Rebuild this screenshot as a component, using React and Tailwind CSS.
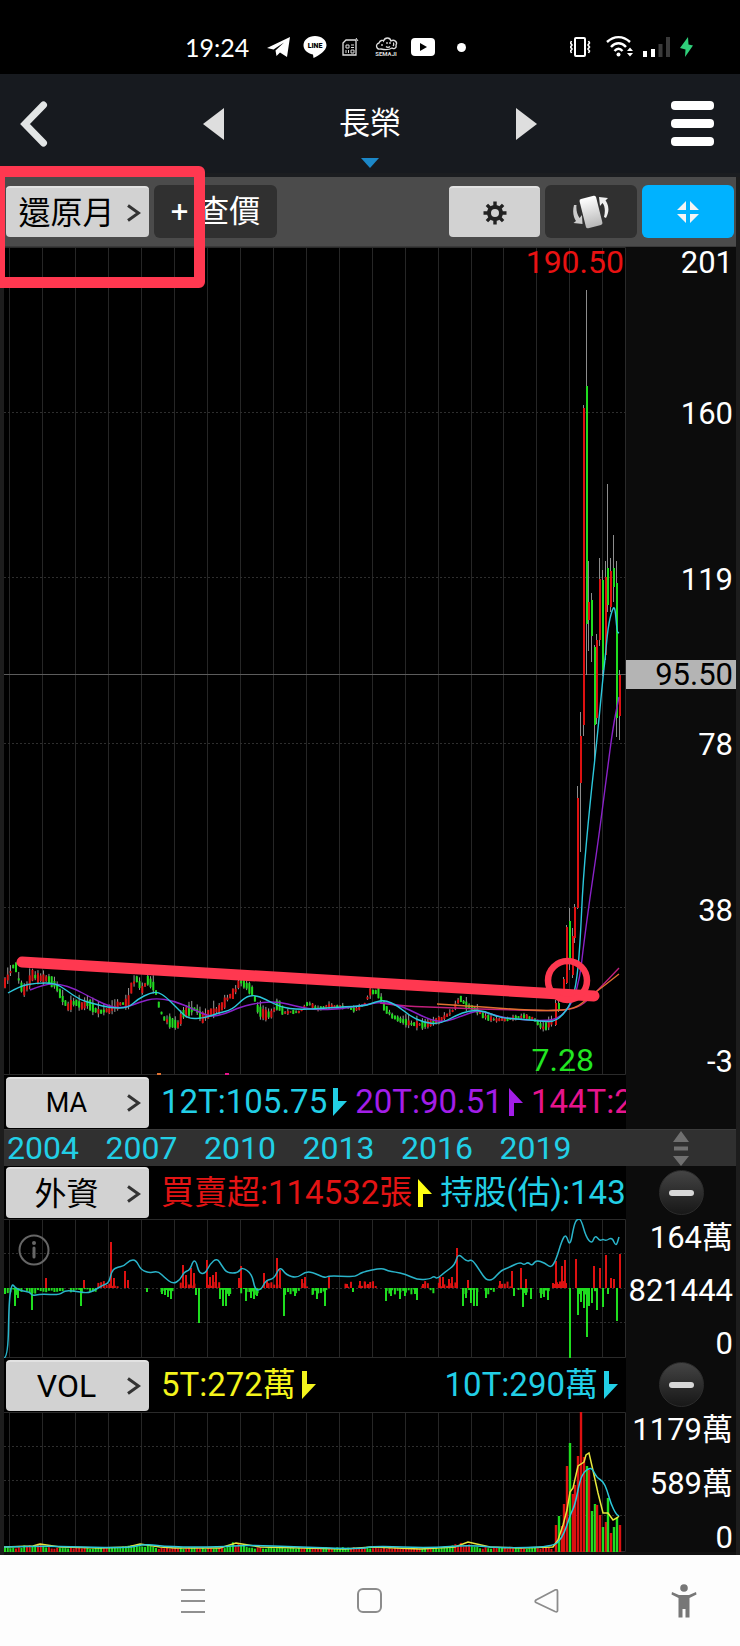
import React, { useState } from "react";

const RED = "#dd1111";
const GREEN = "#1fdd1f";
const CYAN = "#2cc8dc";
const PURPLE = "#8a22c8";

// vertical grid line of every year, 2004 - 2022
const YEAR_LINES = Array.from({ length: 19 }, (_, i) => Math.round(9.2 + i * 32.95) + 0.5);

// smoothed closing prices before the rally, [x, y]
const CLOSES = [
  [4, 985], [9, 975], [15, 963], [20, 985], [25, 992], [32, 975], [38, 978], [48, 979], [56, 985], [62, 998],
  [68, 1007], [75, 1002], [82, 1006], [88, 1003], [95, 1010], [100, 1012], [112, 1009], [120, 1004], [128, 1003],
  [132, 985], [137, 979], [142, 990], [148, 980], [155, 988], [160, 1010], [165, 1020], [170, 1022], [178, 1025],
  [183, 1014], [190, 1010], [196, 1009], [202, 1018], [212, 1012], [220, 1009], [228, 998], [235, 992], [240, 981],
  [247, 986], [253, 992], [258, 1010], [265, 1015], [272, 1014], [278, 1003], [284, 1013], [290, 1012], [300, 1012],
  [308, 1003], [318, 1009], [330, 1006], [345, 1007], [355, 1010], [365, 1004], [370, 992], [378, 992], [385, 1008],
  [392, 1016], [400, 1020], [412, 1024], [425, 1025], [440, 1020], [452, 1012], [460, 998], [466, 1005], [475, 1009],
  [486, 1017], [495, 1020], [510, 1019], [525, 1016], [535, 1020], [543, 1028], [550, 1024], [556, 1016],
];

// [x, high, body top, body bottom, low, up]
const RALLY = [
  [556, 1000, 1003, 1025, 1026, 1], [559, 998, 1003, 1010, 1012, 0], [564, 977, 979, 1000, 1002, 1],
  [567, 925, 927, 983, 984, 1], [570, 908, 921, 960, 970, 0], [573, 928, 936, 975, 978, 1],
  [575, 904, 907, 938, 943, 1], [578, 786, 798, 908, 909, 1], [581, 712, 736, 783, 852, 1],
  [584, 405, 408, 725, 736, 1], [587, 290, 386, 624, 675, 0], [589, 561, 602, 620, 651, 1],
  [592, 593, 600, 636, 662, 0], [595, 645, 647, 725, 762, 0], [597, 634, 640, 718, 724, 1],
  [600, 558, 579, 640, 646, 1], [603, 570, 580, 670, 676, 0], [606, 561, 577, 655, 660, 1],
  [608, 484, 568, 605, 612, 0], [611, 558, 571, 607, 612, 1], [614, 535, 568, 587, 602, 0],
  [617, 561, 583, 718, 737, 0], [620, 670, 675, 716, 740, 1],
];

const MA12 = "8,993 20,986 36,983 55,983 66,990 80,1000 95,1004 110,1008 128,1008 138,999 150,993 158,992 166,997 178,1009 188,1019 205,1018 218,1013 232,1010 245,997 255,995 265,999 280,1007 300,1010 340,1007 365,1006 375,1002 385,1000 398,1006 410,1016 425,1023 440,1024 455,1016 470,1010 485,1011 500,1018 520,1019 540,1021 553,1022 562,1016 570,1005 576,987 580,947 583,880 590,803 597,740 603,677 605,660 608,627 612,610 615,606 617,632 619,633";
const MA20 = "30,990 45,984 60,984 75,989 90,997 110,1007 125,1008 140,1002 155,998 175,1001 195,1010 210,1017 225,1014 240,1007 262,1002 280,1002 295,1006 315,1010 340,1009 365,1005 380,1002 395,1004 410,1010 430,1020 445,1022 462,1016 478,1010 490,1014 510,1019 545,1021 560,1018 573,1002 580,977 583,950 590,897 598,843 607,773 613,727 619,697";
const MA144 = "380,1003 400,1006 430,1007 480,1009 520,1010 555,1011 578,1008 590,998 600,988 619,968";
const MA240 = "437,1004 470,1006 510,1009 550,1011 575,1009 588,998 605,985 619,974";

const BUYS = [
  [46, 1278], [84, 1280], [111, 1242], [114, 1278], [125, 1271], [128, 1280], [183, 1265], [186, 1275], [191, 1268],
  [194, 1273], [207, 1260], [210, 1277], [213, 1275], [216, 1272], [239, 1278], [241, 1266], [264, 1273], [267, 1280],
  [277, 1258], [280, 1270], [302, 1279], [305, 1277], [329, 1277], [347, 1284], [360, 1281], [365, 1282], [368, 1284],
  [423, 1284], [440, 1277], [443, 1277], [449, 1279], [452, 1277], [457, 1248], [468, 1280], [500, 1281], [512, 1271],
  [521, 1268], [526, 1279], [553, 1283], [556, 1261], [559, 1284], [562, 1266], [565, 1260], [576, 1259], [594, 1266],
  [600, 1268], [606, 1255], [611, 1278], [614, 1279], [620, 1254],
];
const SELLS = [
  [5, 1294], [15, 1306], [18, 1298], [32, 1310], [60, 1291], [81, 1306], [147, 1292], [162, 1294], [165, 1295],
  [168, 1297], [171, 1299], [196, 1295], [199, 1323], [220, 1299], [223, 1306], [226, 1306], [229, 1296], [246, 1301],
  [251, 1298], [254, 1299], [257, 1296], [284, 1316], [288, 1292], [295, 1296], [313, 1294], [317, 1299], [321, 1293],
  [325, 1306], [353, 1292], [386, 1301], [391, 1296], [400, 1299], [405, 1296], [415, 1294], [417, 1300], [463, 1306],
  [466, 1298], [471, 1303], [474, 1306], [477, 1306], [486, 1298], [514, 1296], [523, 1307], [526, 1295], [531, 1299],
  [541, 1298], [544, 1297], [548, 1300], [570, 1358], [578, 1315], [581, 1302], [584, 1308], [587, 1337], [589, 1306],
  [592, 1303], [597, 1310], [603, 1307], [608, 1294], [617, 1321],
];
// runs of months with small net flows, [from, to, up]
const SMALL_FLOWS = [
  [4, 22, 0], [26, 64, 0], [70, 96, 0], [98, 120, 1], [160, 174, 0], [180, 196, 1], [208, 220, 1], [220, 232, 0],
  [240, 262, 0], [266, 280, 1], [284, 300, 0], [302, 308, 1], [311, 328, 0], [344, 352, 1], [358, 376, 1],
  [384, 418, 0], [420, 428, 1], [430, 436, 0], [438, 458, 1], [462, 478, 0], [484, 496, 0], [497, 512, 1],
  [518, 528, 0], [538, 550, 0], [552, 568, 1], [578, 598, 0],
];
const HOLDING = "4,1358 8,1357 9,1300 12,1283 15,1288 22,1291 30,1292 32,1296 40,1294 60,1295 65,1290 80,1292 88,1293 95,1290 103,1285 109,1283 112,1270 118,1267 124,1266 130,1260 136,1260 141,1270 150,1273 158,1271 165,1278 173,1284 180,1280 184,1272 190,1270 193,1261 196,1261 199,1273 205,1274 210,1264 217,1258 222,1266 227,1273 238,1273 242,1267 252,1274 255,1290 261,1290 266,1280 274,1279 280,1266 286,1275 297,1278 305,1272 312,1272 325,1278 328,1276 340,1276 355,1277 362,1272 382,1268 388,1271 395,1272 405,1274 418,1280 430,1279 434,1276 437,1279 445,1272 455,1265 458,1253 467,1262 472,1259 480,1271 486,1280 493,1280 500,1271 510,1267 520,1262 524,1265 528,1262 532,1266 536,1260 545,1263 551,1268 556,1260 562,1240 566,1234 570,1247 574,1225 577,1219 581,1219 586,1237 592,1244 595,1235 600,1241 603,1239 606,1241 612,1237 616,1247 619,1237";

const VOLUMES = [
  [556, 1525, 1], [559, 1516, 0], [562, 1526, 1], [564, 1504, 1], [567, 1466, 1], [570, 1443, 0], [573, 1494, 1],
  [575, 1485, 1], [578, 1456, 1], [581, 1412, 1], [584, 1457, 1], [587, 1466, 0], [589, 1470, 1], [592, 1511, 0],
  [595, 1504, 0], [597, 1505, 1], [600, 1515, 1], [603, 1527, 0], [606, 1522, 1], [608, 1498, 0], [611, 1533, 1],
  [614, 1527, 0], [617, 1517, 0], [620, 1525, 1],
];
const VOL5 = "4,1547 33,1546 40,1544 60,1547 100,1548 128,1547 140,1544 160,1547 175,1548 220,1548 236,1543 260,1547 345,1549 372,1547 420,1549 455,1547 468,1542 490,1547 520,1548 553,1547 558,1540 563,1525 567,1510 570,1492 573,1488 578,1466 584,1462 586,1455 589,1453 592,1466 598,1493 603,1513 608,1513 613,1520 617,1518 619,1516";
const VOL10 = "4,1547 40,1546 80,1547 128,1548 145,1544 170,1547 220,1547 245,1545 300,1547 360,1549 374,1546 430,1548 470,1545 500,1548 553,1547 562,1538 567,1525 571,1513 575,1505 580,1480 584,1472 588,1469 592,1468 597,1478 603,1481 607,1490 611,1504 616,1514 619,1516";

function noise(i) {
  const v = Math.sin(i * 127.1 + 11.7) * 43758.5453;
  return v - Math.floor(v);
}

function closeAt(x) {
  const k = CLOSES.findIndex((p) => p[0] > x);
  if (k < 1) return CLOSES[k === 0 ? 0 : CLOSES.length - 1][1];
  const [x0, y0] = CLOSES[k - 1];
  const [x1, y1] = CLOSES[k];
  return y0 + ((y1 - y0) * (x - x0)) / (x1 - x0);
}

// curve through the middles of the segments, so averages have no corners
function smooth(points) {
  const p = points.split(" ").map((s) => s.split(",").map(Number));
  let d = `M${p[0][0]} ${p[0][1]}`;
  for (let i = 1; i < p.length - 1; i++) {
    d += `Q${p[i][0]} ${p[i][1]} ${(p[i][0] + p[i + 1][0]) / 2} ${(p[i][1] + p[i + 1][1]) / 2}`;
  }
  const end = p[p.length - 1];
  return `${d}L${end[0]} ${end[1]}`;
}

const MONTHS = Array.from({ length: 200 }, (_, i) => 5 + i * 2.746);

function Grid({ top, bottom, lines }) {
  return (
    <g fill="none">
      {YEAR_LINES.map((x) => (
        <line key={x} x1={x} x2={x} y1={top} y2={bottom} stroke="#262626" />
      ))}
      {lines.map((y) => (
        <line key={y} x1="4" x2="626" y1={y} y2={y} stroke="#2e2e2e" strokeDasharray="2 2" />
      ))}
      <path d={`M4 ${top + 0.5}H625.5V${bottom - 0.5}H4`} stroke="#2a2a2a" />
    </g>
  );
}

function PriceChart() {
  return (
    <svg className="block w-full h-[828px]" viewBox="4 247 622 828" preserveAspectRatio="none">
      <Grid top={247} bottom={1075} lines={[412.5, 577.5, 743.5, 907.5]} />
      <path d="M4 674.5H626" stroke="#5c5c5c" />
      {MONTHS.map((x, i) => {
        const y = closeAt(x);
        const up = closeAt(x + 2.7) < y + (noise(i) - 0.5) * 5;
        const quiet = x > 285 && x < 365 ? 0.4 : x > 490 && x < 535 ? 0.4 : x > 385 ? 0.7 : 1;
        const body = (2 + noise(i + 300) * 9) * quiet;
        const wick = noise(i + 600) ** 2 * 8 * quiet;
        return (
          <g key={x}>
            <rect x={x - 0.5} y={y - body / 2 - wick} width="1" height={body + wick * 1.5} fill="#9a9a9a" />
            <rect x={x - 1} y={y - body / 2} width="2" height={body} fill={up ? RED : GREEN} />
          </g>
        );
      })}
      {RALLY.map(([x, high, top, bottom, low, up]) => (
        <g key={x}>
          <rect x={x - 1} y={high} width="1" height={low - high} fill="#8c8c8c" />
          <rect x={x - 1} y={top} width="2" height={bottom - top} fill={up ? RED : GREEN} />
        </g>
      ))}
      <g fill="none" strokeWidth="1.4">
        <path d={smooth(MA144)} stroke="#c0207c" />
        <path d={smooth(MA240)} stroke="#e07030" />
        <path d={smooth(MA20)} stroke={PURPLE} />
        <path d={smooth(MA12)} stroke={CYAN} />
      </g>
      <path d="M157 1074h4" stroke="#e07030" strokeWidth="2" />
      <path d="M225 1074h4" stroke="#e6148c" strokeWidth="2" />
      <path d="M22 962Q300 979 594 996" fill="none" stroke="#ff3850" strokeWidth="11" strokeLinecap="round" />
      <circle cx="567.5" cy="980.5" r="19.5" fill="none" stroke="#ff3850" strokeWidth="6.5" />
    </svg>
  );
}

function ForeignChart() {
  return (
    <svg className="block w-full h-[139px]" viewBox="4 1219 622 139" preserveAspectRatio="none">
      <Grid top={1219} bottom={1358} lines={[1253.5, 1288.5, 1322.5]} />
      {SMALL_FLOWS.map(([from, to, up], k) =>
        MONTHS.concat([554, 557, 560, 563, 566, 580, 583, 586, 589, 592, 595])
          .filter((x) => x >= from && x < to)
          .map((x, i) => {
            const h = 1 + noise(i + k * 31) * 6;
            return <rect key={`${k}-${i}`} x={x - 1} y={up ? 1288 - h : 1288} width="2" height={h} fill={up ? RED : GREEN} />;
          })
      )}
      {BUYS.map(([x, y]) => (
        <rect key={x} x={x - 1} y={y} width="2" height={1288 - y} fill={RED} />
      ))}
      {SELLS.map(([x, y]) => (
        <rect key={x} x={x - 1} y="1288" width="2" height={y - 1288} fill={GREEN} />
      ))}
      <path d={smooth(HOLDING)} fill="none" stroke="#2ab4ca" strokeWidth="1.5" />
      <g fill="none" stroke="#666">
        <circle cx="34" cy="1250" r="14.5" strokeWidth="2" />
        <path d="M34 1248v9" strokeWidth="3" strokeLinecap="round" />
        <path d="M34 1243v0.1" strokeWidth="4" strokeLinecap="round" />
      </g>
    </svg>
  );
}

function VolumeChart() {
  return (
    <svg className="block w-full h-[140px]" viewBox="4 1412 622 140" preserveAspectRatio="none">
      <Grid top={1412} bottom={1552} lines={[1446.5, 1480.5, 1515.5]} />
      {MONTHS.map((x, i) => {
        const hump = [35, 137, 237, 462].reduce((s, c) => s + Math.exp(-((x - c) ** 2) / 120), 0);
        const h = 3 + noise(i + 50) * 2 + hump * (2 + noise(i + 90) * 4);
        const up = noise(Math.floor(i / 2) + 20) > 0.5;
        return <rect key={x} x={x - 1} y={1552 - h} width="2" height={h} fill={up ? RED : GREEN} />;
      })}
      {VOLUMES.map(([x, y, up]) => (
        <rect key={x} x={x - 1.2} y={y} width="2.4" height={1552 - y} fill={up ? RED : GREEN} />
      ))}
      <g fill="none" strokeWidth="1.5">
        <polyline points={VOL5} stroke="#e6e63c" />
        <path d={smooth(VOL10)} stroke={CYAN} />
      </g>
    </svg>
  );
}

function Chevron() {
  return (
    <svg className="w-[14px] h-[18px] shrink-0" viewBox="0 0 14 18" fill="none" stroke="#333" strokeWidth="3">
      <path d="M1 1.500L11.500 9L1 16.500" />
    </svg>
  );
}

function MenuButton({ children, small }) {
  return (
    <button
      className={`w-[143px] h-[51px] shrink-0 flex items-center pr-2 rounded bg-[#d2d2d2] border-t-2 border-[#e2e2e2] text-black ${small ? "text-[27px]" : "text-[32px]"}`}
    >
      <span className="flex-1 text-center leading-10 whitespace-nowrap">{children}</span>
      <Chevron />
    </button>
  );
}

function Trend({ up, color = "currentColor" }) {
  return (
    <svg className="w-[14px] h-7 shrink-0" viewBox="0 0 14 28" fill={color}>
      <path d={up ? "M0 0L14 15H5V28H0Z" : "M0 28L14 13H5V0H0Z"} />
    </svg>
  );
}

function Value({ className, children, up, arrow }) {
  return (
    <span className={`flex items-center gap-[6px] shrink-0 whitespace-nowrap ${className}`}>
      <span>{children}</span>
      <Trend up={up} color={arrow} />
    </span>
  );
}

function CollapseButton({ label }) {
  return (
    <button
      aria-label={label}
      className="w-[45px] h-[45px] self-center flex items-center justify-center rounded-full bg-linear-to-b from-[#444] to-[#181818] border border-[#2c2c2c]"
    >
      <span className="w-[25px] h-[6px] rounded-full bg-[#d8d8d8]"></span>
    </button>
  );
}

function StatusBar() {
  return (
    <div className="h-[74px] pt-5 pl-[185px] pr-[46px] flex items-center justify-between bg-black text-white">
      <div className="flex items-center gap-3">
        <span className="w-[70px] text-[25px] leading-8 font-[Lato,sans-serif]">19:24</span>
        <svg className="w-6 h-6" viewBox="0 0 24 24" fill="white">
          <path d="M0 13L23 2L20 22L13 17.500L9.500 21L8.500 15.500L17 7.500L6.500 14.500Z" />
        </svg>
        <svg className="w-6 h-6" viewBox="0 0 24 24" fill="white">
          <path d="M12 1C5.500 1 0.500 5 0.500 10.300C0.500 15 4.500 18.500 10 19.500L10.500 23C16 20.500 23.500 16 23.500 10.300C23.500 5 18.500 1 12 1Z" />
          <text x="12" y="13" textAnchor="middle" fontSize="7" fontWeight="900" fill="black" fontFamily="Roboto, sans-serif">LINE</text>
        </svg>
        <svg className="w-6 h-6" viewBox="0 0 24 24" fill="none" stroke="#ddd">
          <path d="M4 8L7 5H17V20H4Z" strokeWidth="1.3" />
          <path d="M7 10h3v3h-3zM12 10h3M12 12.500h3M7 15v3M9.500 15v3M12 15h3v3h-3zM17 3l2 3" />
        </svg>
        <svg className="w-6 h-6" viewBox="0 0 24 24" fill="none" stroke="#ddd" strokeWidth="1.300">
          <path d="M6 14C1 15 0 9 4 8C5 5 8 5 8.500 6C10 2 15 2 16 6C19 4 23 7 21 10C22 14 18 14 17 13C14 15 10 15 6 14Z" />
          <path d="M7 9v2M12 7v2M15 7v2M11 11.500c1 1 3 1 4 0M18 8c1 0 1 2 0 3" />
          <text x="11" y="21" textAnchor="middle" fontSize="6" fontWeight="700" fill="#ddd" stroke="none" fontFamily="Roboto, sans-serif">SEMAJI</text>
        </svg>
        <svg className="w-6 h-6" viewBox="0 0 24 24">
          <rect y="3" width="24" height="18" rx="4" fill="white" />
          <path d="M9 8L16 12L9 16Z" fill="black" />
        </svg>
        <span className="w-[9px] h-[9px] ml-[10px] rounded-full bg-white"></span>
      </div>
      <div className="flex items-center gap-[10px]">
        <svg className="w-[26px] h-6" viewBox="0 0 26 24" fill="none" stroke="white" strokeWidth="2">
          <rect x="5" y="3" width="10" height="18" rx="1" />
          <path d="M1.500 6l-1 2l1.500 2l-1.500 2l1.500 2l-1.500 2l1 2M18.500 6l1 2l-1.500 2l1.500 2l-1.500 2l1.500 2l-1 2" strokeWidth="1.600" />
        </svg>
        <svg className="w-[27px] h-6" viewBox="0 0 27 24" fill="none" stroke="white" strokeWidth="2.400">
          <path d="M1 7C8 0.500 17 0.500 24 7M5 12C9.500 7 15.500 7 20 12M8.500 16C11 13 14 13 16.500 16" />
          <circle cx="12.500" cy="19.500" r="2" fill="white" stroke="none" />
          <path d="M21 16L24 12.500L27 16ZM21 18L24 21.500L27 18Z" fill="white" stroke="none" />
        </svg>
        <svg className="w-[27px] h-6" viewBox="0 0 27 24">
          <path d="M0 16h4v6H0zM8 14h4v8H8z" fill="white" />
          <path d="M15.500 9h4v13h-4zM23 2h4v20h-4z" fill="#3a3a3a" />
        </svg>
        <svg className="w-[14px] h-6" viewBox="0 0 14 24" fill="#2fd07a">
          <path d="M8 2L0 13L5.500 14.500L5 22L13 10.500L8.500 9.500Z" />
        </svg>
      </div>
    </div>
  );
}

function Header() {
  return (
    <header className="relative h-[103px] px-5 grid grid-cols-[1fr_334px_1fr] items-center bg-[#171a1f] border-b-4 border-[#1b1d20]">
      <button aria-label="返回" className="justify-self-start">
        <svg className="w-7 h-[46px]" viewBox="0 0 28 46" fill="none" stroke="#e2e5e5" strokeWidth="7" strokeLinecap="round">
          <path d="M23.500 4L5 23L23.500 42" />
        </svg>
      </button>
      <div className="flex items-center justify-between">
        <button aria-label="上一檔">
          <svg className="w-[21px] h-8" viewBox="0 0 21 32" fill="#dedede">
            <path d="M0 16L21 0V32Z" />
          </svg>
        </button>
        <h1 className="text-[31px] leading-10 text-white">長榮</h1>
        <button aria-label="下一檔">
          <svg className="w-[21px] h-8" viewBox="0 0 21 32" fill="#dedede">
            <path d="M21 16L0 0V32Z" />
          </svg>
        </button>
      </div>
      <button aria-label="選單" className="justify-self-end mr-[6px] w-[43px] flex flex-col gap-[9px]">
        <span className="h-[9px] rounded bg-white"></span>
        <span className="h-[9px] rounded bg-white"></span>
        <span className="h-[9px] rounded bg-white"></span>
      </button>
      <svg className="absolute bottom-[5px] left-1/2 -translate-x-1/2 w-[18px] h-[10px]" viewBox="0 0 18 10" fill="#1c88c8">
        <path d="M0 0H18L9 10Z" />
      </svg>
    </header>
  );
}

function Toolbar() {
  const [full, setFull] = useState(true);

  return (
    <div className="relative h-[70px] px-[2px] flex items-center gap-[5px] bg-[#4b4b4b] border-b border-[#3a3a3a]">
      <MenuButton>還原月</MenuButton>
      <button className="w-[123px] h-[53px] flex items-center justify-center gap-[10px] rounded-md bg-[#303030] text-white text-[31px] leading-10 whitespace-nowrap">
        <span>+</span>
        <span>查價</span>
      </button>
      <div className="ml-auto flex items-center gap-[5px]">
        <button aria-label="設定" className="w-[91px] h-[51px] flex items-center justify-center rounded bg-[#d2d2d2] border-t-2 border-[#e2e2e2]">
          <svg className="w-6 h-6" viewBox="0 0 24 24" fill="none" stroke="#222">
            <circle cx="12" cy="12" r="6" strokeWidth="4" />
            <g strokeWidth="3.400">
              <path d="M12 0.500V5M12 19V23.500M0.500 12H5M19 12H23.500M3.900 3.900L7 7M17 17L20.100 20.100M3.900 20.100L7 17M17 7L20.100 3.900" />
            </g>
          </svg>
        </button>
        <button aria-label="旋轉畫面" className="w-[92px] h-[53px] flex items-center justify-center rounded-md bg-[#303030]">
          <svg className="w-9 h-9" viewBox="0 0 36 36">
            <defs>
              <linearGradient id="card" x1="0" y1="0" x2="0" y2="1">
                <stop offset="0" stopColor="#fff" />
                <stop offset="1" stopColor="#b8b8b8" />
              </linearGradient>
            </defs>
            <rect x="9.500" y="3" width="17" height="30" rx="2" transform="rotate(-14 18 18)" fill="url(#card)" />
            <path d="M1 11C-1 19 1 24 3 27L0.500 29L9.500 30L9 21L6.500 24C4 20 3 16 3.500 11Z" fill="#ccc" />
            <path d="M33 24C38 15 34 8.500 32.500 6.500L35 4L26 3L27 12L29.500 9C32 12 32.500 17 31 23Z" fill="#eee" />
          </svg>
        </button>
        <button
          aria-label="全螢幕"
          aria-pressed={full}
          onClick={() => setFull(!full)}
          className="w-[92px] h-[53px] flex items-center justify-center rounded-md bg-[#00b2ff]"
        >
          <svg className="w-[22px] h-[22px]" viewBox="0 0 22 22" fill="#f4f4f4">
            <path d="M9 0V9H0ZM13 0V9H22ZM9 22V13H0ZM13 22V13H22Z" />
          </svg>
        </button>
      </div>
      <span className="absolute z-10 -top-[11px] -left-[10px] w-[211px] h-[122px] border-[11px] border-[#ff3850] rounded-md pointer-events-none"></span>
    </div>
  );
}

function NavBar() {
  return (
    <nav className="h-[91px] pl-[104px] pr-[7px] grid grid-cols-[177fr_177fr_177fr_98fr] items-center justify-items-center bg-[#fdfdfd]">
      <button aria-label="最近使用">
        <svg className="w-6 h-6" viewBox="0 0 24 24" stroke="#909090" strokeWidth="2">
          <path d="M0 1H24M0 12H24M0 23H24" />
        </svg>
      </button>
      <button aria-label="主畫面" className="w-[25px] h-[25px] rounded-md border-2 border-[#8c8c8c]"></button>
      <button aria-label="返回上一頁">
        <svg className="w-[25px] h-6" viewBox="0 0 25 24" fill="none" stroke="#8c8c8c" strokeWidth="1.800" strokeLinejoin="round">
          <path d="M23.500 2.500V21.500Q23.500 23.500 21 22.500L2 13.500Q0.500 12.500 2 11L21 1Q23.500 0 23.500 2.500Z" />
        </svg>
      </button>
      <button aria-label="協助工具">
        <svg className="w-[26px] h-[34px]" viewBox="0 0 26 34" fill="#777">
          <circle cx="13" cy="4" r="3.800" />
          <path d="M1 8L8 11H18L25 8L25.500 10.500L18.500 14V33.500H14.500V25H11.500V33.500H7.500V14L0.500 10.500Z" />
        </svg>
      </button>
    </nav>
  );
}

export default function App() {
  return (
    <div className="flex flex-col bg-black text-white overflow-hidden font-[Roboto,'Noto_Sans_CJK_TC',sans-serif]">
      <StatusBar />
      <Header />
      <main className="border-x-4 border-[#1d1d1d] bg-black">
        <Toolbar />
        <section className="flex">
          <div className="flex-1 min-w-0">
            <div className="relative">
              <PriceChart />
              <span className="absolute top-0 right-[2px] text-[32px] leading-[30px] text-[#e81212]">190.50</span>
              <span className="absolute bottom-0 right-8 text-[32px] leading-[30px] text-[#22e622]">7.28</span>
            </div>
            <div className="h-[54px] pl-[2px] flex items-center gap-3">
              <MenuButton small>MA</MenuButton>
              <div className="flex-1 min-w-0 flex items-center gap-2 overflow-hidden text-[33px] leading-[52px]">
                <Value className="text-[#22cfe6]">12T:105.75</Value>
                <Value className="text-[#a31ee8]" up>20T:90.51</Value>
                <Value className="text-[#e6148c]" up>144T:28.33</Value>
              </div>
            </div>
          </div>
          <div className="relative w-[110px] shrink-0 pt-[2px] pr-[3px] pb-[53px] grid grid-rows-[1fr_2fr_2fr_2fr_2fr_1fr] items-center justify-items-end bg-[#0c0c0c] text-[31px] leading-[28px]">
            <span className="self-start">201</span>
            <span>160</span>
            <span>119</span>
            <span>78</span>
            <span>38</span>
            <span className="self-end">-3</span>
            <span className="absolute top-[413px] inset-x-0 pt-px pr-[3px] text-right bg-[#b4b4b4] text-black">95.50</span>
          </div>
        </section>
        <div className="h-[37px] flex items-center bg-[#303030] border-t border-[#3c3c3c]">
          <div className="flex-1 pl-[3px] pr-7 grid grid-cols-6 text-[32px] leading-9 text-[#22cfe6]">
            {[2004, 2007, 2010, 2013, 2016, 2019].map((year) => (
              <span key={year}>{year}</span>
            ))}
          </div>
          <button aria-label="調整高度" className="w-[110px] flex justify-center">
            <svg className="w-4 h-[35px]" viewBox="0 0 16 35" fill="#707070">
              <path d="M8 0L16 11H0ZM8 35L16 25H0ZM1 15.500H15V19.500H1Z" />
            </svg>
          </button>
        </div>
        <section className="flex">
          <div className="flex-1 min-w-0">
            <div className="h-[53px] pl-[2px] flex items-center gap-3">
              <MenuButton>外資</MenuButton>
              <div className="flex-1 min-w-0 flex items-center gap-2 overflow-hidden text-[33px] leading-[52px]">
                <Value className="text-[#e31414]" up arrow="#ffff14">買賣超:114532張</Value>
                <span className="shrink-0 whitespace-nowrap text-[#22cfe6]">持股(估):143</span>
              </div>
            </div>
            <ForeignChart />
          </div>
          <div className="w-[110px] shrink-0 pt-1 flex flex-col bg-[#0c0c0c]">
            <CollapseButton label="收合外資" />
            <div className="flex-1 pt-[9px] pr-[3px] flex flex-col items-end justify-between text-[31px] leading-[28px]">
              <span>164萬</span>
              <span>821444</span>
              <span>0</span>
            </div>
          </div>
        </section>
        <section className="flex">
          <div className="flex-1 min-w-0">
            <div className="h-[54px] pl-[2px] flex items-center gap-3">
              <MenuButton>VOL</MenuButton>
              <div className="flex-1 min-w-0 pr-2 flex items-center justify-between text-[33px] leading-[52px]">
                <Value className="text-[#f4f41c]">5T:272萬</Value>
                <Value className="text-[#22cfe6]">10T:290萬</Value>
              </div>
            </div>
            <VolumeChart />
          </div>
          <div className="w-[110px] shrink-0 pt-1 flex flex-col bg-[#0c0c0c]">
            <CollapseButton label="收合成交量" />
            <div className="flex-1 pt-[9px] pr-[3px] flex flex-col items-end justify-between text-[31px] leading-[28px]">
              <span>1179萬</span>
              <span>589萬</span>
              <span>0</span>
            </div>
          </div>
        </section>
        <div className="h-[3px] bg-[#111]"></div>
      </main>
      <NavBar />
    </div>
  );
}
